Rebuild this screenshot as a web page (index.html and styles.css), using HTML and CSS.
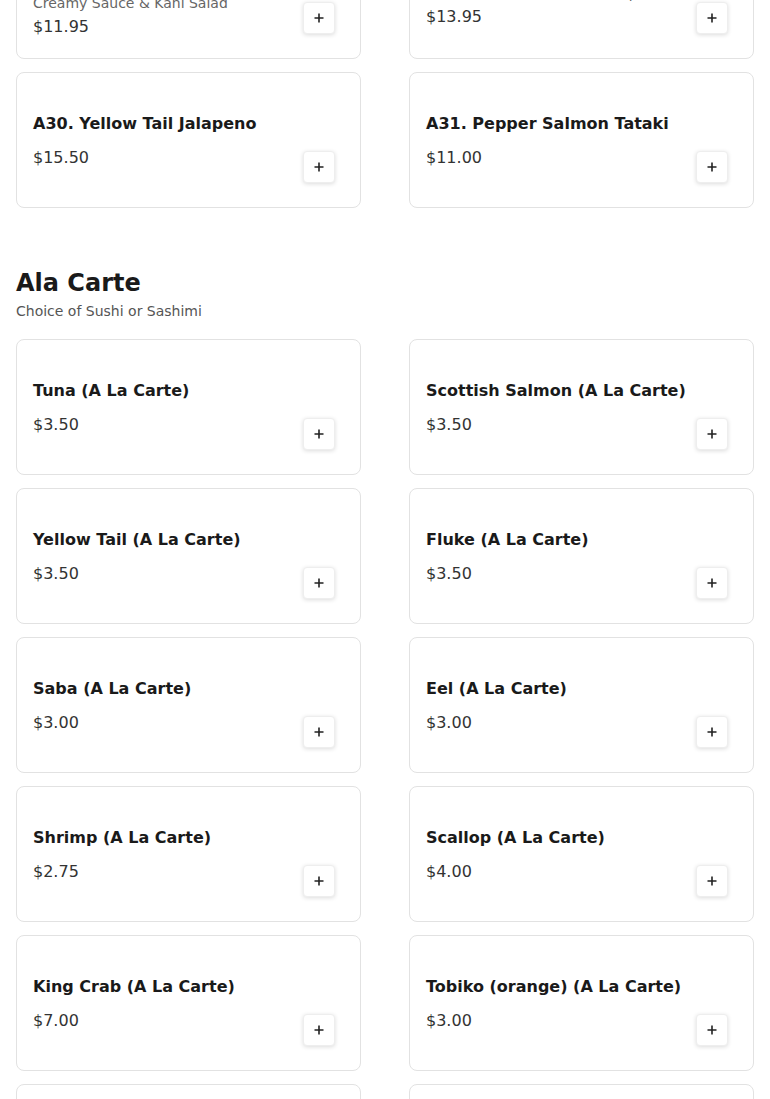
FILE: index.html
```html
<!DOCTYPE html>
<html lang="en">
<head>
<meta charset="utf-8">
<title>Menu</title>
<link rel="stylesheet" href="styles.css">
</head>
<body>
<main class="menu">
  <section class="section section-cut">
    <div class="grid">
      <div class="card">
        <div class="info">
          <div class="title">A28. Kani Salad Special</div>
          <div class="desc">Crab Stick, Cucumber, Masago with<br>Creamy Sauce &amp; Kani Salad</div>
          <div class="price">$11.95</div>
        </div>
        <button class="add" aria-label="Add"><svg viewBox="0 0 10 10" width="10" height="10"><path d="M5 0.5V9.5M0.5 5H9.5" stroke="currentColor" stroke-width="1.6" fill="none"/></svg></button>
      </div>
      <div class="card">
        <div class="info">
          <div class="title">A29. Tuna Tataki</div>
          <div class="desc">Seared Tuna, Ponzu Sauce (5pcs)</div>
          <div class="price">$13.95</div>
        </div>
        <button class="add" aria-label="Add"><svg viewBox="0 0 10 10" width="10" height="10"><path d="M5 0.5V9.5M0.5 5H9.5" stroke="currentColor" stroke-width="1.6" fill="none"/></svg></button>
      </div>
      <div class="card">
        <div class="info">
          <div class="title">A30. Yellow Tail Jalapeno</div>
          <div class="price">$15.50</div>
        </div>
        <button class="add" aria-label="Add"><svg viewBox="0 0 10 10" width="10" height="10"><path d="M5 0.5V9.5M0.5 5H9.5" stroke="currentColor" stroke-width="1.6" fill="none"/></svg></button>
      </div>
      <div class="card">
        <div class="info">
          <div class="title">A31. Pepper Salmon Tataki</div>
          <div class="price">$11.00</div>
        </div>
        <button class="add" aria-label="Add"><svg viewBox="0 0 10 10" width="10" height="10"><path d="M5 0.5V9.5M0.5 5H9.5" stroke="currentColor" stroke-width="1.6" fill="none"/></svg></button>
      </div>
    </div>
  </section>

  <section class="section">
    <h2 class="section-title">Ala Carte</h2>
    <p class="section-sub">Choice of Sushi or Sashimi</p>
    <div class="grid">
      <div class="card"><div class="info"><div class="title">Tuna (A La Carte)</div><div class="price">$3.50</div></div><button class="add" aria-label="Add"><svg viewBox="0 0 10 10" width="10" height="10"><path d="M5 0.5V9.5M0.5 5H9.5" stroke="currentColor" stroke-width="1.6" fill="none"/></svg></button></div>
      <div class="card"><div class="info"><div class="title">Scottish Salmon (A La Carte)</div><div class="price">$3.50</div></div><button class="add" aria-label="Add"><svg viewBox="0 0 10 10" width="10" height="10"><path d="M5 0.5V9.5M0.5 5H9.5" stroke="currentColor" stroke-width="1.6" fill="none"/></svg></button></div>
      <div class="card"><div class="info"><div class="title">Yellow Tail (A La Carte)</div><div class="price">$3.50</div></div><button class="add" aria-label="Add"><svg viewBox="0 0 10 10" width="10" height="10"><path d="M5 0.5V9.5M0.5 5H9.5" stroke="currentColor" stroke-width="1.6" fill="none"/></svg></button></div>
      <div class="card"><div class="info"><div class="title">Fluke (A La Carte)</div><div class="price">$3.50</div></div><button class="add" aria-label="Add"><svg viewBox="0 0 10 10" width="10" height="10"><path d="M5 0.5V9.5M0.5 5H9.5" stroke="currentColor" stroke-width="1.6" fill="none"/></svg></button></div>
      <div class="card"><div class="info"><div class="title">Saba (A La Carte)</div><div class="price">$3.00</div></div><button class="add" aria-label="Add"><svg viewBox="0 0 10 10" width="10" height="10"><path d="M5 0.5V9.5M0.5 5H9.5" stroke="currentColor" stroke-width="1.6" fill="none"/></svg></button></div>
      <div class="card"><div class="info"><div class="title">Eel (A La Carte)</div><div class="price">$3.00</div></div><button class="add" aria-label="Add"><svg viewBox="0 0 10 10" width="10" height="10"><path d="M5 0.5V9.5M0.5 5H9.5" stroke="currentColor" stroke-width="1.6" fill="none"/></svg></button></div>
      <div class="card"><div class="info"><div class="title">Shrimp (A La Carte)</div><div class="price">$2.75</div></div><button class="add" aria-label="Add"><svg viewBox="0 0 10 10" width="10" height="10"><path d="M5 0.5V9.5M0.5 5H9.5" stroke="currentColor" stroke-width="1.6" fill="none"/></svg></button></div>
      <div class="card"><div class="info"><div class="title">Scallop (A La Carte)</div><div class="price">$4.00</div></div><button class="add" aria-label="Add"><svg viewBox="0 0 10 10" width="10" height="10"><path d="M5 0.5V9.5M0.5 5H9.5" stroke="currentColor" stroke-width="1.6" fill="none"/></svg></button></div>
      <div class="card"><div class="info"><div class="title">King Crab (A La Carte)</div><div class="price">$7.00</div></div><button class="add" aria-label="Add"><svg viewBox="0 0 10 10" width="10" height="10"><path d="M5 0.5V9.5M0.5 5H9.5" stroke="currentColor" stroke-width="1.6" fill="none"/></svg></button></div>
      <div class="card"><div class="info"><div class="title">Tobiko (orange) (A La Carte)</div><div class="price">$3.00</div></div><button class="add" aria-label="Add"><svg viewBox="0 0 10 10" width="10" height="10"><path d="M5 0.5V9.5M0.5 5H9.5" stroke="currentColor" stroke-width="1.6" fill="none"/></svg></button></div>
      <div class="card"><div class="info"><div class="title">Masago (A La Carte)</div><div class="price">$3.00</div></div><button class="add" aria-label="Add"><svg viewBox="0 0 10 10" width="10" height="10"><path d="M5 0.5V9.5M0.5 5H9.5" stroke="currentColor" stroke-width="1.6" fill="none"/></svg></button></div>
      <div class="card"><div class="info"><div class="title">Ikura (A La Carte)</div><div class="price">$4.00</div></div><button class="add" aria-label="Add"><svg viewBox="0 0 10 10" width="10" height="10"><path d="M5 0.5V9.5M0.5 5H9.5" stroke="currentColor" stroke-width="1.6" fill="none"/></svg></button></div>
    </div>
  </section>
</main>
</body>
</html>
```
FILE: styles.css
```css
* { box-sizing: border-box; }

html, body {
  margin: 0;
  padding: 0;
  background: #ffffff;
  font-family: "DejaVu Sans", "Liberation Sans", sans-serif;
  color: #1c1c1c;
}

.menu {
  padding: 0 16px;
  display: flex;
  flex-direction: column;
  gap: 59px;
}

.section-cut {
  margin-top: -77px;
}

.section-title {
  margin: 0;
  font-size: 24px;
  line-height: 32px;
  font-weight: 700;
  color: #1a1a1a;
}

.section-sub {
  margin: 2px 0 18px;
  font-size: 14px;
  line-height: 20px;
  color: #555555;
}

.grid {
  display: grid;
  grid-template-columns: 1fr 1fr;
  column-gap: 48px;
  row-gap: 13px;
}

.card {
  min-height: 136px;
  border: 1px solid #e2e2e2;
  border-radius: 8px;
  background: #ffffff;
  padding: 18px 16px 16px;
  display: grid;
  grid-template-columns: 1fr;
  grid-template-rows: 1fr;
}

.info {
  grid-area: 1 / 1;
  align-self: center;
  min-width: 0;
  display: flex;
  flex-direction: column;
}

.title {
  font-size: 16px;
  line-height: 24px;
  font-weight: 700;
  color: #1a1a1a;
}

.desc {
  margin-top: 4px;
  font-size: 14px;
  line-height: 20px;
  color: #666666;
}

.price {
  margin-top: 10px;
  font-size: 16px;
  line-height: 24px;
  color: #333333;
}

.desc + .price {
  margin-top: 2px;
}

.add {
  grid-area: 1 / 1;
  justify-self: end;
  align-self: end;
  width: 32px;
  height: 32px;
  margin: 0 9px 8px 0;
  padding: 0;
  border: 1px solid #eeeeee;
  border-radius: 4px;
  background: #ffffff;
  box-shadow: 0 1px 4px rgba(0, 0, 0, 0.14);
  color: #222222;
  display: flex;
  align-items: center;
  justify-content: center;
  cursor: pointer;
}

.add svg {
  display: block;
}
```
